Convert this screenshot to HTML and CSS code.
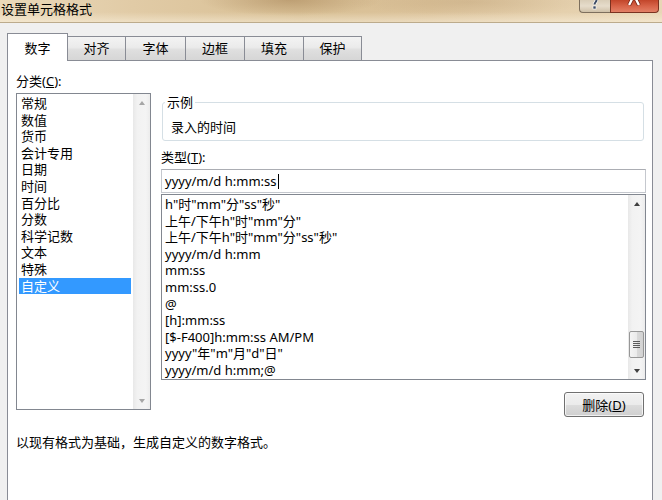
FILE: index.html
```html
<!DOCTYPE html>
<html lang="zh-CN">
<head>
<meta charset="utf-8">
<title>设置单元格格式</title>
<link rel="stylesheet" href="styles.css">
</head>
<body>
<div class="window">
  <div class="titlebar">
    <div class="title">设置单元格格式</div>
    <div class="caption-buttons">
      <div class="cap-btn cap-help">
        <svg width="31" height="13" viewBox="0 0 31 13">
          <path d="M17.5 0 C17.5 2 15.5 2.5 15.5 4.5" fill="none" stroke="#ffffff" stroke-width="3.4"/>
          <path d="M17.5 0 C17.5 2 15.5 2.5 15.5 4.5" fill="none" stroke="#3d4b63" stroke-width="2"/>
          <rect x="14" y="6" width="3" height="3" fill="#3d4b63" stroke="#ffffff" stroke-width="0.6"/>
        </svg>
      </div>
      <div class="cap-btn cap-close">
        <svg width="49" height="13" viewBox="0 0 49 13">
          <path d="M24 -4 L19.5 5 M25 -4 L29.5 5" fill="none" stroke="#7a2412" stroke-width="4"/>
          <path d="M24 -4 L19.5 5 M25 -4 L29.5 5" fill="none" stroke="#ffffff" stroke-width="2.4"/>
        </svg>
      </div>
    </div>
  </div>
  <div class="client">
    <div class="tabs">
      <div class="tab active">数字</div>
      <div class="tab">对齐</div>
      <div class="tab">字体</div>
      <div class="tab">边框</div>
      <div class="tab">填充</div>
      <div class="tab">保护</div>
    </div>
    <div class="panel">
      <div class="main">
        <div class="left-col">
          <div class="label">分类(<u>C</u>):</div>
          <div class="listbox cat-list">
            <ul class="items">
              <li>常规</li>
              <li>数值</li>
              <li>货币</li>
              <li>会计专用</li>
              <li>日期</li>
              <li>时间</li>
              <li>百分比</li>
              <li>分数</li>
              <li>科学记数</li>
              <li>文本</li>
              <li>特殊</li>
              <li class="selected">自定义</li>
            </ul>
            <div class="vscroll disabled">
              <div class="sb-btn"><span class="arrow-up"></span></div>
              <div class="sb-space"></div>
              <div class="sb-btn"><span class="arrow-down"></span></div>
            </div>
          </div>
        </div>
        <div class="right-col">
          <fieldset class="sample">
            <legend>示例</legend>
            <div class="sample-text">录入的时间</div>
          </fieldset>
          <div class="label type-label">类型(<u>T</u>):</div>
          <div class="textbox">yyyy/m/d h:mm:ss<span class="caret"></span></div>
          <div class="listbox fmt-list">
            <ul class="items">
              <li>h"时"mm"分"ss"秒"</li>
              <li>上午/下午h"时"mm"分"</li>
              <li>上午/下午h"时"mm"分"ss"秒"</li>
              <li>yyyy/m/d h:mm</li>
              <li>mm:ss</li>
              <li>mm:ss.0</li>
              <li>@</li>
              <li>[h]:mm:ss</li>
              <li>[$-F400]h:mm:ss AM/PM</li>
              <li>yyyy"年"m"月"d"日"</li>
              <li>yyyy/m/d h:mm;@</li>
            </ul>
            <div class="vscroll">
              <div class="sb-btn"><span class="arrow-up"></span></div>
              <div class="sb-space"></div>
              <div class="thumb"><span class="grip"></span></div>
              <div class="sb-btn"><span class="arrow-down"></span></div>
            </div>
          </div>
          <div class="btn-row">
            <button class="btn" type="button">删除(<u>D</u>)</button>
          </div>
        </div>
      </div>
      <div class="desc">以现有格式为基础，生成自定义的数字格式。</div>
    </div>
  </div>
</div>
</body>
</html>
```
FILE: styles.css
```css
* {
  box-sizing: border-box;
}

html,
body {
  margin: 0;
  padding: 0;
}

body {
  width: 662px;
  height: 500px;
  overflow: hidden;
  background: #f0f0f0;
  font-family: "Noto Sans", "Noto Sans CJK SC", sans-serif;
  font-size: 13px;
  color: #000;
}

.window {
  width: 662px;
  height: 500px;
  display: flex;
  flex-direction: column;
}

/* ---------- title bar ---------- */
.titlebar {
  height: 23px;
  flex: none;
  display: flex;
  align-items: flex-start;
  border-bottom: 1px solid #bcab8c;
  background:
    linear-gradient(to bottom, rgba(255, 255, 255, 0) 55%, rgba(255, 248, 232, 0.45) 100%),
    radial-gradient(ellipse 90px 16px at 290px 0px, rgba(140, 100, 55, 0.35), rgba(140, 100, 55, 0)),
    radial-gradient(ellipse 120px 14px at 470px 2px, rgba(150, 115, 70, 0.18), rgba(150, 115, 70, 0)),
    linear-gradient(to right, #ead9ba 0%, #e1cba6 20%, #d8bf94 45%, #dcc39b 65%, #e5d0ad 85%, #e8d6b6 100%);
}

.title {
  padding-left: 1px;
  line-height: 18px;
  font-family: "Noto Sans CJK SC", sans-serif;
  font-size: 13px;
  color: #000;
  white-space: nowrap;
}

.caption-buttons {
  margin-left: auto;
  margin-right: 3px;
  display: flex;
}

.cap-btn {
  height: 13px;
  border: 1px solid #7d6f5d;
  border-top: 0;
  display: flex;
}

.cap-btn svg {
  display: block;
}

.cap-help {
  width: 31px;
  border-right: 0;
  border-bottom-left-radius: 4px;
  background: linear-gradient(to bottom, #d9cdb8, #e6dccb 50%, #cfc1a8);
}

.cap-help svg {
  margin-left: -1px;
}

.cap-close {
  width: 49px;
  border-color: #7a3220;
  border-bottom-right-radius: 4px;
  background: linear-gradient(to bottom, #c2452a, #d9664b 55%, #e28066);
}

.cap-close svg {
  margin-left: -1px;
}

/* ---------- client ---------- */
.client {
  flex: 1;
  min-height: 0;
  padding: 10px 0 0 7px;
  overflow: hidden;
}

.tabs {
  display: flex;
  align-items: flex-start;
  height: 28px;
  margin-bottom: -1px;
  position: relative;
  z-index: 1;
}

.tab {
  width: 58px;
  height: 24px;
  margin-top: 3px;
  padding-top: 3px;
  border: 1px solid #898c95;
  border-left: 0;
  border-bottom: 0;
  text-align: center;
  line-height: 16px;
  font-family: "Noto Sans CJK SC", sans-serif;
  background: linear-gradient(to bottom, #f3f3f3, #ebebeb 45%, #dfdfdf 55%, #d6d6d6);
}

.tab.active {
  width: 61px;
  height: 28px;
  margin-top: 0;
  padding-top: 6px;
  border-left: 1px solid #898c95;
  background: #fff;
}

.tab:nth-child(3) {
  width: 60px;
}

.tab:nth-child(4),
.tab:nth-child(5) {
  width: 59px;
}

.panel {
  width: 646px;
  height: 445px;
  border: 1px solid #898c95;
  background: #fff;
  padding: 12px 0 0 8px;
}

.main {
  display: flex;
  align-items: flex-start;
}

.left-col {
  width: 135px;
  flex: none;
}

.label {
  height: 16px;
  line-height: 16px;
  white-space: nowrap;
}

.label u {
  text-underline-offset: 1px;
}

/* ---------- list boxes ---------- */
.listbox {
  display: flex;
  border: 1px solid #828790;
  background: #fff;
}

.items {
  list-style: none;
  margin: 0;
  padding: 1px 0 0;
  flex: 1;
  min-width: 0;
  overflow: hidden;
}

.items li {
  height: 16.6px;
  line-height: 16.6px;
  white-space: nowrap;
}

.cat-list {
  margin-top: 4px;
  height: 317px;
}

.cat-list li {
  margin: 0 2px;
  padding-left: 2px;
}

.cat-list li.selected {
  background: #3399ff;
  color: #fff;
}

.fmt-list {
  margin-top: 1px;
  height: 186px;
}

.fmt-list li {
  padding-left: 3px;
}

.vscroll {
  width: 17px;
  flex: none;
  display: flex;
  flex-direction: column;
  background: linear-gradient(to right, #e8e8e8, #f2f2f2 25%, #f4f4f4 75%, #ececec);
}

.sb-btn {
  height: 17px;
  flex: none;
  display: flex;
  align-items: center;
  justify-content: center;
}

.sb-space {
  flex: 1;
}

.arrow-up {
  width: 0;
  height: 0;
  border-left: 3.5px solid transparent;
  border-right: 3.5px solid transparent;
  border-bottom: 4px solid #404040;
}

.arrow-down {
  width: 0;
  height: 0;
  border-left: 3.5px solid transparent;
  border-right: 3.5px solid transparent;
  border-top: 4px solid #404040;
}

.vscroll.disabled .arrow-up {
  border-bottom-color: #a6a6a6;
}

.vscroll.disabled .arrow-down {
  border-top-color: #a6a6a6;
}

.thumb {
  height: 27px;
  margin: 0 1px 4px;
  flex: none;
  border: 1px solid #979797;
  border-radius: 2px;
  background: linear-gradient(to right, #f4f4f4, #ebebeb 50%, #dadada 50%, #d2d2d2);
  display: flex;
  align-items: center;
  justify-content: center;
}

.grip {
  width: 7px;
  height: 7px;
  background: repeating-linear-gradient(to bottom, #5a5a5a 0, #5a5a5a 1px, transparent 1px, transparent 2px);
}

/* ---------- right column ---------- */
.right-col {
  margin-left: 10px;
  width: 485px;
  flex: none;
}

.sample {
  margin: 21px 0 0 1px;
  width: 482px;
  min-width: 0;
  border: 1px solid #d5dfe5;
  border-radius: 3px;
  padding: 9px 0 5px 8px;
}

.sample legend {
  padding: 0 2px;
  margin-left: -6px;
  line-height: 16px;
}

.sample-text {
  line-height: 16px;
}

.type-label {
  margin-top: 8px;
}

.textbox {
  margin-top: 4px;
  height: 24px;
  border: 1px solid #abadb3;
  border-left-color: #c5c8ce;
  border-right-color: #c5c8ce;
  border-bottom-color: #c5c8ce;
  padding-left: 3px;
  display: flex;
  align-items: center;
  white-space: nowrap;
  background: #fff;
}

.caret {
  display: inline-block;
  width: 1px;
  height: 15px;
  margin-left: 1px;
  background: #000;
}

.btn-row {
  display: flex;
  justify-content: flex-end;
  margin-top: 12px;
  padding-right: 2px;
}

.btn {
  width: 80px;
  height: 25px;
  padding: 0;
  border: 1px solid #707070;
  border-radius: 3px;
  font-family: "Noto Sans", "Noto Sans CJK SC", sans-serif;
  font-size: 13px;
  line-height: 16px;
  color: #000;
  background: linear-gradient(to bottom, #f2f2f2 0%, #ebebeb 50%, #dddddd 50%, #cfcfcf 100%);
  box-shadow: inset 0 0 0 1px rgba(255, 255, 255, 0.7);
}

.btn u {
  text-underline-offset: 1px;
}

.desc {
  margin-top: 17px;
  line-height: 16px;
  white-space: nowrap;
}
```
